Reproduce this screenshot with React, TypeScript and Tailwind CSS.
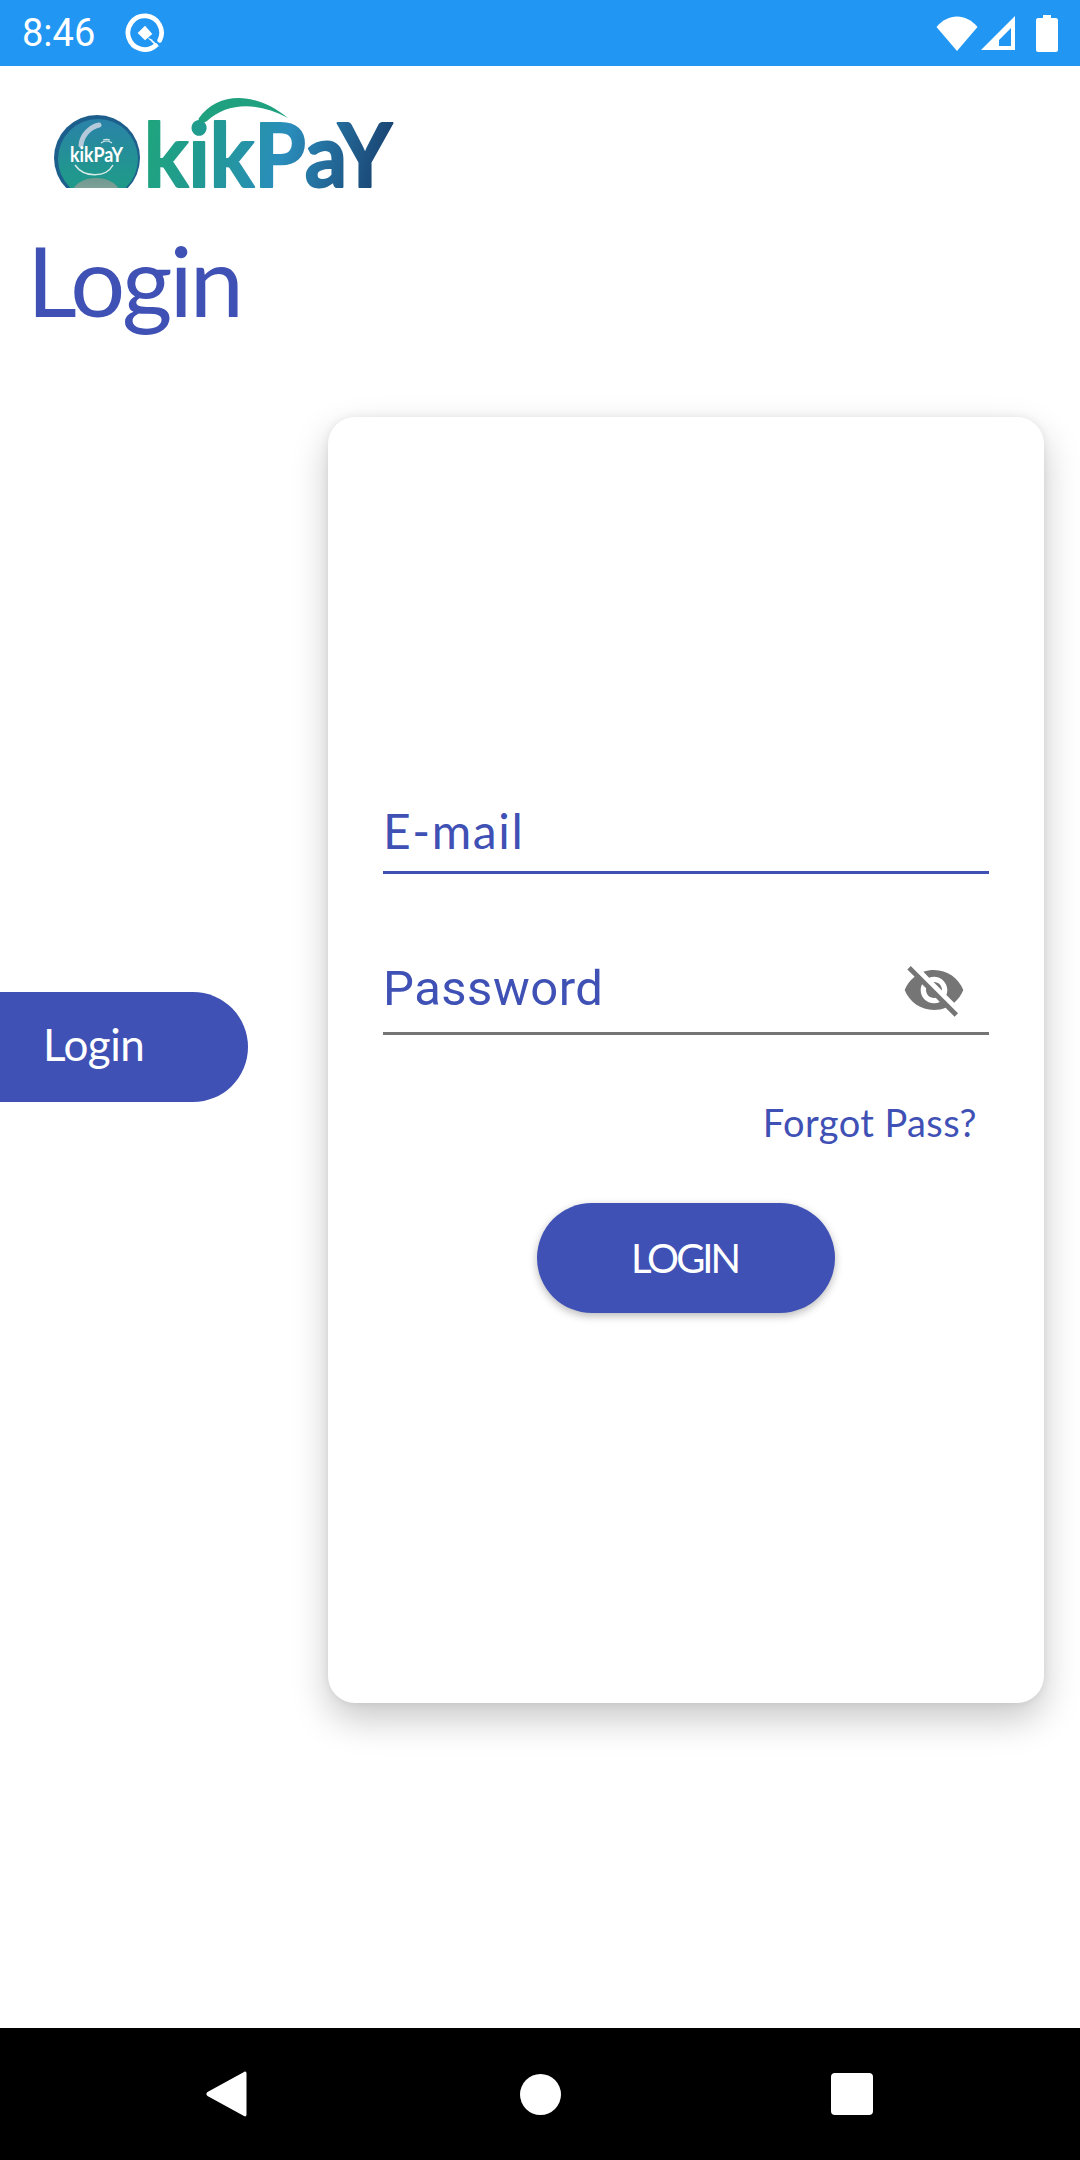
import React from "react";
import { MdVisibilityOff } from "react-icons/md";

const lato = "font-['Lato','Liberation_Sans',sans-serif]";
const roboto = "font-['Roboto','Liberation_Sans',sans-serif]";

const StatusBar: React.FC = () => (
    <div className="h-[66px] shrink-0 bg-[#2196F3] flex items-center text-white">
        <span className={`${roboto} ml-[22px] text-[38px] leading-none`}>8:46</span>
        {/* Icono de notificación */}
        <svg className="ml-[29px]" width="42" height="42" viewBox="0 0 40 40" fill="none">
            <path
                d="M30 32 A16 16 0 1 1 34 27"
                stroke="white"
                strokeWidth="4.5"
                strokeLinecap="round"
            />
            <path d="M20 13 L27 21 L20 27 L13 20 Z" fill="white" />
            <path d="M22 24 L30 32 L34 33 L26 26 Z" fill="white" />
        </svg>
        <div className="ml-auto mr-[22px] flex items-center">
            <svg width="42" height="35" viewBox="0 0 42 35">
                <path d="M0.5 11 C12 -3 30 -3 41.5 11 L21 35 Z" fill="white" />
            </svg>
            <svg className="ml-[3px]" width="35" height="35" viewBox="0 0 35 35">
                <path
                    fillRule="evenodd"
                    d="M0 34 L34 0 L34 34 Z M18 30 L30 30 L30 12 L18 24 Z"
                    fill="white"
                />
            </svg>
            <svg className="ml-[20px]" width="22" height="37" viewBox="0 0 22 37">
                <path
                    d="M7 0 H15 V3 H20 C21 3 22 4 22 5 V35 C22 36 21 37 20 37 H2 C1 37 0 36 0 35 V5 C0 4 1 3 2 3 H7 Z"
                    fill="white"
                />
            </svg>
        </div>
    </div>
);

const Logo: React.FC = () => (
    <svg className="ml-[50px] mt-[27px] block" width="420" height="115" viewBox="50 93 420 115">
        <defs>
            <linearGradient id="word" gradientUnits="userSpaceOnUse" x1="145" y1="124" x2="393" y2="188">
                <stop offset="0" stopColor="#1FA57C" />
                <stop offset="0.25" stopColor="#219A92" />
                <stop offset="0.55" stopColor="#2A8DBB" />
                <stop offset="0.8" stopColor="#215F8E" />
                <stop offset="1" stopColor="#173B69" />
            </linearGradient>
            <linearGradient id="ball" x1="0" y1="0" x2="0" y2="1">
                <stop offset="0" stopColor="#2A82A8" />
                <stop offset="0.65" stopColor="#21968F" />
                <stop offset="1" stopColor="#1F9C84" />
            </linearGradient>
            <linearGradient id="hump" x1="0" y1="0" x2="0" y2="1">
                <stop offset="0" stopColor="#6F9A8F" />
                <stop offset="1" stopColor="#A6B0AC" />
            </linearGradient>
            <clipPath id="cut">
                <rect x="50" y="93" width="350" height="95" />
            </clipPath>
        </defs>
        {/* Círculo del logo */}
        <g clipPath="url(#cut)">
            <circle cx="97" cy="158" r="43" fill="#1D5F8C" />
            <circle cx="98" cy="159" r="40" fill="url(#ball)" />
            <ellipse cx="96" cy="196" rx="25" ry="18" fill="url(#hump)" />
        </g>
        <path d="M99 125 C90 127 82 135 81 145" stroke="#B4C9DA" strokeWidth="5" fill="none" strokeLinecap="round" />
        <path
            d="M101 143 A9 9 0 0 1 112 143 M103 140 A12 12 0 0 1 110 140"
            stroke="#CFE3E6"
            strokeWidth="1.2"
            fill="none"
        />
        <text
            x="70"
            y="162"
            fontFamily="Lato, sans-serif"
            fontWeight="700"
            fontSize="20"
            fill="white"
            textLength="53"
            lengthAdjust="spacingAndGlyphs"
        >
            kikPaY
        </text>
        <path d="M75 165 C84 178 106 178 113 165" stroke="#D8EBE6" strokeWidth="1.5" fill="none" />
        {/* Palabra */}
        <text
            x="144"
            y="187"
            fontFamily="Lato, sans-serif"
            fontWeight="700"
            fontSize="88"
            fill="url(#word)"
            stroke="url(#word)"
            strokeWidth="2"
            strokeLinejoin="round"
            textLength="248"
            lengthAdjust="spacingAndGlyphs"
        >
            kikPaY
        </text>
        <path d="M199 118 C218 92 255 91 288 118 C258 102 228 102 207 121 C203 124 197 122 199 118 Z" fill="#1FA07F" />
    </svg>
);

const NavBar: React.FC = () => (
    <div className="h-[132px] shrink-0 bg-black flex items-center">
        <svg className="ml-[206px]" width="41" height="46" viewBox="0 0 41 46">
            <path
                d="M38 1 C39.5 0 40.5 1 40.5 2.5 V43.5 C40.5 45 39.5 46 38 45 L1.5 25 C0 24 0 22 1.5 21 Z"
                fill="white"
            />
        </svg>
        <div className="ml-[273px] w-[41px] h-[41px] rounded-full bg-white" />
        <div className="ml-[270px] w-[42px] h-[42px] rounded-[4px] bg-white" />
    </div>
);

const App: React.FC = () => {
    return (
        <div className="w-[1080px] h-[2160px] bg-white flex flex-col overflow-hidden">
            <StatusBar />

            <div className="flex-1 flex flex-col">
                <Logo />
                <h1 className={`${lato} ml-[27px] mt-[23px] text-[97px] leading-none text-[#3F51B5] tracking-[-3px]`}>
                    Login
                </h1>

                <div className="mt-[89px] flex items-start">
                    {/* Pestaña lateral */}
                    <div className="mt-[575px] w-[248px] h-[110px] shrink-0 bg-[#3F51B5] rounded-r-[55px] flex items-center pl-[43px]">
                        <span className={`${lato} text-white text-[44px] leading-none tracking-[-0.5px] pb-[6px]`}>Login</span>
                    </div>

                    {/* Tarjeta */}
                    <div className="ml-[80px] w-[716px] h-[1286px] bg-white rounded-[27px] shadow-[0_16px_36px_rgba(0,0,0,0.22),0_0_8px_rgba(0,0,0,0.07)] px-[55px] pt-[390px] flex flex-col">
                        <div className="border-b-[3px] border-[#3F51B5] pb-[16px]">
                            <span className={`${lato} block text-[48px] leading-none text-[#3F51B5] tracking-[1.6px]`}>E-mail</span>
                        </div>

                        <div className="mt-[84px] border-b-[3px] border-[#757575] pb-[14px] h-[77px] flex items-center justify-between">
                            <span className={`${roboto} text-[49px] leading-none text-[#3F51B5] tracking-[0.5px]`}>Password</span>
                            <MdVisibilityOff className="mr-[23px] mt-[4px] text-[#757575]" size={64} />
                        </div>

                        <span className={`${lato} mt-[68px] self-end mr-[12px] text-[38px] leading-none text-[#3F51B5] tracking-[0.4px]`}>
                            Forgot Pass?
                        </span>

                        <button className="mt-[62px] self-center w-[298px] h-[110px] rounded-[55px] bg-[#3F51B5] text-white shadow-[0_3px_8px_rgba(0,0,0,0.28)] flex items-center justify-center">
                            <span className={`${lato} text-[40px] leading-none tracking-[-3px] pr-[3px]`}>LOGIN</span>
                        </button>
                    </div>
                </div>
            </div>

            <NavBar />
        </div>
    );
};

export default App;
